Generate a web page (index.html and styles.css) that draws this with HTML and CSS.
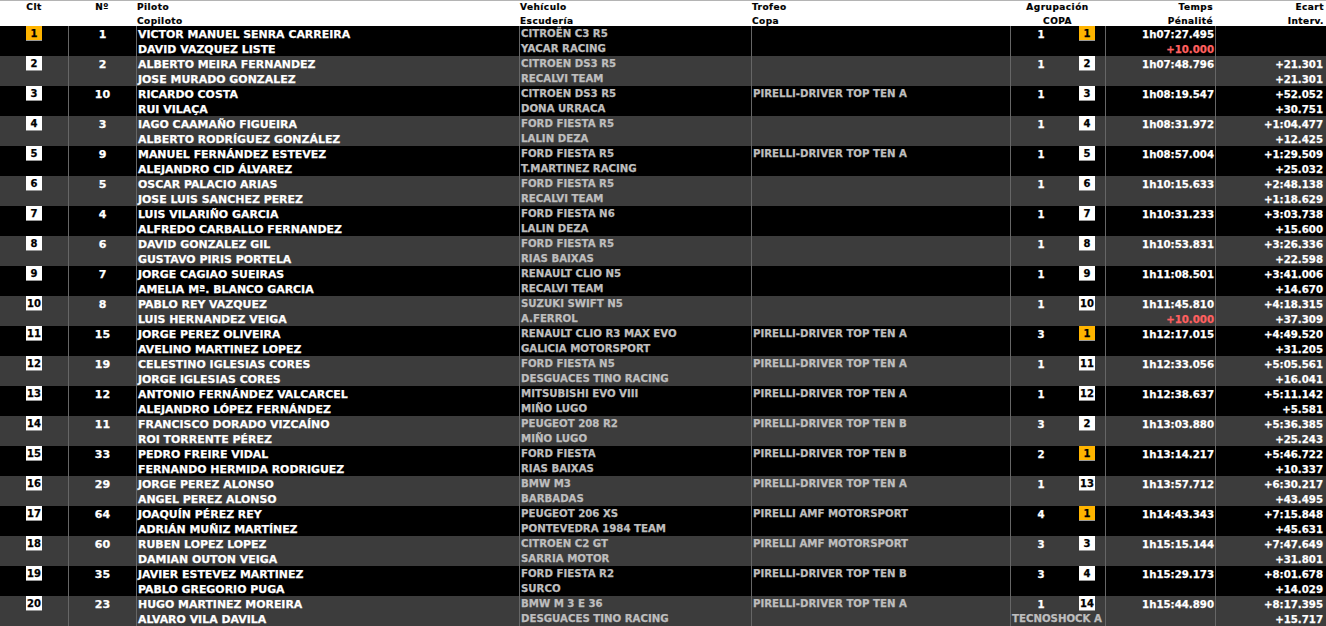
FILE: index.html
```html
<!DOCTYPE html>
<html lang="es">
<head>
<meta charset="utf-8">
<title>Clasificación</title>
<link rel="stylesheet" href="styles.css">
</head>
<body>
<div class="board">
<div class="head">
<div class="h-c"><span>Clt</span></div><div class="h-c"><span>Nº</span></div><div class="h-l"><span>Piloto</span><span>Copiloto</span></div><div class="h-l"><span>Vehículo</span><span>Escudería</span></div><div class="h-l"><span>Trofeo</span><span>Copa</span></div><div class="h-c"><span>Agrupación</span><span>COPA</span></div><div class="h-r"><span>Temps</span><span>Pénalité</span></div><div class="h-r"><span>Ecart</span><span>Interv.</span></div>
</div>
<div class="row"><div class="c-pos"><span class="badge gold">1</span></div><div class="c-num">1</div><div class="c-crew"><span>VICTOR MANUEL SENRA CARREIRA</span><span>DAVID VAZQUEZ LISTE</span></div><div class="c-car"><span>CITROËN C3 R5</span><span>YACAR RACING</span></div><div class="c-car"></div><div class="c-agr"><span class="agr-n">1</span><span class="badge gold">1</span></div><div class="c-time"><span>1h07:27.495</span><span class="pen">+10.000</span></div><div class="c-time"></div></div>
<div class="row"><div class="c-pos"><span class="badge">2</span></div><div class="c-num">2</div><div class="c-crew"><span>ALBERTO MEIRA FERNANDEZ</span><span>JOSE MURADO GONZALEZ</span></div><div class="c-car"><span>CITROEN DS3 R5</span><span>RECALVI TEAM</span></div><div class="c-car"></div><div class="c-agr"><span class="agr-n">1</span><span class="badge">2</span></div><div class="c-time"><span>1h07:48.796</span></div><div class="c-time"><span>+21.301</span><span>+21.301</span></div></div>
<div class="row"><div class="c-pos"><span class="badge">3</span></div><div class="c-num">10</div><div class="c-crew"><span>RICARDO COSTA</span><span>RUI VILAÇA</span></div><div class="c-car"><span>CITROEN DS3 R5</span><span>DONA URRACA</span></div><div class="c-car"><span>PIRELLI-DRIVER TOP TEN A</span></div><div class="c-agr"><span class="agr-n">1</span><span class="badge">3</span></div><div class="c-time"><span>1h08:19.547</span></div><div class="c-time"><span>+52.052</span><span>+30.751</span></div></div>
<div class="row"><div class="c-pos"><span class="badge">4</span></div><div class="c-num">3</div><div class="c-crew"><span>IAGO CAAMAÑO FIGUEIRA</span><span>ALBERTO RODRÍGUEZ GONZÁLEZ</span></div><div class="c-car"><span>FORD FIESTA R5</span><span>LALIN DEZA</span></div><div class="c-car"></div><div class="c-agr"><span class="agr-n">1</span><span class="badge">4</span></div><div class="c-time"><span>1h08:31.972</span></div><div class="c-time"><span>+1:04.477</span><span>+12.425</span></div></div>
<div class="row"><div class="c-pos"><span class="badge">5</span></div><div class="c-num">9</div><div class="c-crew"><span>MANUEL FERNÁNDEZ ESTEVEZ</span><span>ALEJANDRO CID ÁLVAREZ</span></div><div class="c-car"><span>FORD FIESTA R5</span><span>T.MARTINEZ RACING</span></div><div class="c-car"><span>PIRELLI-DRIVER TOP TEN A</span></div><div class="c-agr"><span class="agr-n">1</span><span class="badge">5</span></div><div class="c-time"><span>1h08:57.004</span></div><div class="c-time"><span>+1:29.509</span><span>+25.032</span></div></div>
<div class="row"><div class="c-pos"><span class="badge">6</span></div><div class="c-num">5</div><div class="c-crew"><span>OSCAR PALACIO ARIAS</span><span>JOSE LUIS SANCHEZ PEREZ</span></div><div class="c-car"><span>FORD FIESTA R5</span><span>RECALVI TEAM</span></div><div class="c-car"></div><div class="c-agr"><span class="agr-n">1</span><span class="badge">6</span></div><div class="c-time"><span>1h10:15.633</span></div><div class="c-time"><span>+2:48.138</span><span>+1:18.629</span></div></div>
<div class="row"><div class="c-pos"><span class="badge">7</span></div><div class="c-num">4</div><div class="c-crew"><span>LUIS VILARIÑO GARCIA</span><span>ALFREDO CARBALLO FERNANDEZ</span></div><div class="c-car"><span>FORD FIESTA N6</span><span>LALIN DEZA</span></div><div class="c-car"></div><div class="c-agr"><span class="agr-n">1</span><span class="badge">7</span></div><div class="c-time"><span>1h10:31.233</span></div><div class="c-time"><span>+3:03.738</span><span>+15.600</span></div></div>
<div class="row"><div class="c-pos"><span class="badge">8</span></div><div class="c-num">6</div><div class="c-crew"><span>DAVID GONZALEZ GIL</span><span>GUSTAVO PIRIS PORTELA</span></div><div class="c-car"><span>FORD FIESTA R5</span><span>RIAS BAIXAS</span></div><div class="c-car"></div><div class="c-agr"><span class="agr-n">1</span><span class="badge">8</span></div><div class="c-time"><span>1h10:53.831</span></div><div class="c-time"><span>+3:26.336</span><span>+22.598</span></div></div>
<div class="row"><div class="c-pos"><span class="badge">9</span></div><div class="c-num">7</div><div class="c-crew"><span>JORGE CAGIAO SUEIRAS</span><span>AMELIA Mª. BLANCO GARCIA</span></div><div class="c-car"><span>RENAULT CLIO N5</span><span>RECALVI TEAM</span></div><div class="c-car"></div><div class="c-agr"><span class="agr-n">1</span><span class="badge">9</span></div><div class="c-time"><span>1h11:08.501</span></div><div class="c-time"><span>+3:41.006</span><span>+14.670</span></div></div>
<div class="row"><div class="c-pos"><span class="badge">10</span></div><div class="c-num">8</div><div class="c-crew"><span>PABLO REY VAZQUEZ</span><span>LUIS HERNANDEZ VEIGA</span></div><div class="c-car"><span>SUZUKI SWIFT N5</span><span>A.FERROL</span></div><div class="c-car"></div><div class="c-agr"><span class="agr-n">1</span><span class="badge">10</span></div><div class="c-time"><span>1h11:45.810</span><span class="pen">+10.000</span></div><div class="c-time"><span>+4:18.315</span><span>+37.309</span></div></div>
<div class="row"><div class="c-pos"><span class="badge">11</span></div><div class="c-num">15</div><div class="c-crew"><span>JORGE PEREZ OLIVEIRA</span><span>AVELINO MARTINEZ LOPEZ</span></div><div class="c-car"><span>RENAULT CLIO R3 MAX EVO</span><span>GALICIA MOTORSPORT</span></div><div class="c-car"><span>PIRELLI-DRIVER TOP TEN A</span></div><div class="c-agr"><span class="agr-n">3</span><span class="badge gold">1</span></div><div class="c-time"><span>1h12:17.015</span></div><div class="c-time"><span>+4:49.520</span><span>+31.205</span></div></div>
<div class="row"><div class="c-pos"><span class="badge">12</span></div><div class="c-num">19</div><div class="c-crew"><span>CELESTINO IGLESIAS CORES</span><span>JORGE IGLESIAS CORES</span></div><div class="c-car"><span>FORD FIESTA N5</span><span>DESGUACES TINO RACING</span></div><div class="c-car"><span>PIRELLI-DRIVER TOP TEN A</span></div><div class="c-agr"><span class="agr-n">1</span><span class="badge">11</span></div><div class="c-time"><span>1h12:33.056</span></div><div class="c-time"><span>+5:05.561</span><span>+16.041</span></div></div>
<div class="row"><div class="c-pos"><span class="badge">13</span></div><div class="c-num">12</div><div class="c-crew"><span>ANTONIO FERNÁNDEZ VALCARCEL</span><span>ALEJANDRO LÓPEZ FERNÁNDEZ</span></div><div class="c-car"><span>MITSUBISHI EVO VIII</span><span>MIÑO LUGO</span></div><div class="c-car"><span>PIRELLI-DRIVER TOP TEN A</span></div><div class="c-agr"><span class="agr-n">1</span><span class="badge">12</span></div><div class="c-time"><span>1h12:38.637</span></div><div class="c-time"><span>+5:11.142</span><span>+5.581</span></div></div>
<div class="row"><div class="c-pos"><span class="badge">14</span></div><div class="c-num">11</div><div class="c-crew"><span>FRANCISCO DORADO VIZCAÍNO</span><span>ROI TORRENTE PÉREZ</span></div><div class="c-car"><span>PEUGEOT 208 R2</span><span>MIÑO LUGO</span></div><div class="c-car"><span>PIRELLI-DRIVER TOP TEN B</span></div><div class="c-agr"><span class="agr-n">3</span><span class="badge">2</span></div><div class="c-time"><span>1h13:03.880</span></div><div class="c-time"><span>+5:36.385</span><span>+25.243</span></div></div>
<div class="row"><div class="c-pos"><span class="badge">15</span></div><div class="c-num">33</div><div class="c-crew"><span>PEDRO FREIRE VIDAL</span><span>FERNANDO HERMIDA RODRIGUEZ</span></div><div class="c-car"><span>FORD FIESTA</span><span>RIAS BAIXAS</span></div><div class="c-car"><span>PIRELLI-DRIVER TOP TEN B</span></div><div class="c-agr"><span class="agr-n">2</span><span class="badge gold">1</span></div><div class="c-time"><span>1h13:14.217</span></div><div class="c-time"><span>+5:46.722</span><span>+10.337</span></div></div>
<div class="row"><div class="c-pos"><span class="badge">16</span></div><div class="c-num">29</div><div class="c-crew"><span>JORGE PEREZ ALONSO</span><span>ANGEL PEREZ ALONSO</span></div><div class="c-car"><span>BMW M3</span><span>BARBADAS</span></div><div class="c-car"><span>PIRELLI-DRIVER TOP TEN A</span></div><div class="c-agr"><span class="agr-n">1</span><span class="badge">13</span></div><div class="c-time"><span>1h13:57.712</span></div><div class="c-time"><span>+6:30.217</span><span>+43.495</span></div></div>
<div class="row"><div class="c-pos"><span class="badge">17</span></div><div class="c-num">64</div><div class="c-crew"><span>JOAQUÍN PÉREZ REY</span><span>ADRIÁN MUÑIZ MARTÍNEZ</span></div><div class="c-car"><span>PEUGEOT 206 XS</span><span>PONTEVEDRA 1984 TEAM</span></div><div class="c-car"><span>PIRELLI AMF MOTORSPORT</span></div><div class="c-agr"><span class="agr-n">4</span><span class="badge gold">1</span></div><div class="c-time"><span>1h14:43.343</span></div><div class="c-time"><span>+7:15.848</span><span>+45.631</span></div></div>
<div class="row"><div class="c-pos"><span class="badge">18</span></div><div class="c-num">60</div><div class="c-crew"><span>RUBEN LOPEZ LOPEZ</span><span>DAMIAN OUTON VEIGA</span></div><div class="c-car"><span>CITROEN C2 GT</span><span>SARRIA MOTOR</span></div><div class="c-car"><span>PIRELLI AMF MOTORSPORT</span></div><div class="c-agr"><span class="agr-n">3</span><span class="badge">3</span></div><div class="c-time"><span>1h15:15.144</span></div><div class="c-time"><span>+7:47.649</span><span>+31.801</span></div></div>
<div class="row"><div class="c-pos"><span class="badge">19</span></div><div class="c-num">35</div><div class="c-crew"><span>JAVIER ESTEVEZ MARTINEZ</span><span>PABLO GREGORIO PUGA</span></div><div class="c-car"><span>FORD FIESTA R2</span><span>SURCO</span></div><div class="c-car"><span>PIRELLI-DRIVER TOP TEN B</span></div><div class="c-agr"><span class="agr-n">3</span><span class="badge">4</span></div><div class="c-time"><span>1h15:29.173</span></div><div class="c-time"><span>+8:01.678</span><span>+14.029</span></div></div>
<div class="row"><div class="c-pos"><span class="badge">20</span></div><div class="c-num">23</div><div class="c-crew"><span>HUGO MARTINEZ MOREIRA</span><span>ALVARO VILA DAVILA</span></div><div class="c-car"><span>BMW M 3 E 36</span><span>DESGUACES TINO RACING</span></div><div class="c-car"><span>PIRELLI-DRIVER TOP TEN A</span></div><div class="c-agr"><span class="agr-n">1</span><span class="badge">14</span><span class="agr-cup">TECNOSHOCK A</span></div><div class="c-time"><span>1h15:44.890</span></div><div class="c-time"><span>+8:17.395</span><span>+15.717</span></div></div>
</div>
</body>
</html>
```
FILE: styles.css
```css
* { box-sizing: border-box; }
html, body { margin: 0; padding: 0; height: 626px; overflow: hidden; background: #fff; }
body { font-family: "DejaVu Sans", Verdana, sans-serif; font-weight: 700; }
.board { width: 1326px; }
.head, .row {
  display: grid;
  grid-template-columns: 68px 68px 383px 232px 259px 95px 110px 111px;
  white-space: nowrap;
}
.head {
  height: 26px;
  border-top: 1px solid #b4b4b4;
  font-size: 9px;
  letter-spacing: 0.45px;
  color: #000;
  background: #fff;
  -webkit-text-stroke: 0.2px #000;
}
.head div { display: flex; flex-direction: column; }
.head span { height: 14px; line-height: 12px; }
.h-c { align-items: center; }
.h-l { padding-left: 1px; }
.h-r { align-items: flex-end; padding-right: 2px; }
.row { height: 30px; background: #000; color: #fff; font-size: 10.2px; -webkit-text-stroke: 0.25px currentColor; }
.row:nth-child(odd) { background: #3c3c3c; }
.row > div { border-left: 1px solid #666; }
.row > div:first-child { border-left: 0; }
.c-pos { display: flex; justify-content: center; align-items: flex-start; }
.badge {
  display: block;
  width: 16px;
  height: 15px;
  background: #fff;
  color: #000;
  border-bottom: 1px solid #999;
  font-size: 10px;
  line-height: 15px;
  text-align: center;
}
.badge.gold { background: #ffb400; }
.c-num { text-align: center; line-height: 17px; font-size: 11px; }
.c-crew, .c-car, .c-time { display: flex; flex-direction: column; }
.c-crew span, .c-car span, .c-time span { height: 15px; line-height: 17px; }
.c-crew { padding-left: 1px; font-size: 10.95px; }
.c-car { padding-left: 1px; color: #bebebe; font-size: 10.2px; }
.c-car span { line-height: 16px; }
.c-time { align-items: flex-end; padding-right: 1px; }
.c-time + .c-time { padding-right: 3px; }
.pen { color: #ff6060; }
.c-agr {
  display: grid;
  grid-template-columns: 60px 16px;
  column-gap: 8px;
  grid-template-rows: 15px 15px;
  align-items: start;
  line-height: 17px;
}
.agr-n { text-align: center; }
.agr-cup {
  grid-column: 1 / -1;
  color: #bebebe;
  font-size: 10.2px;
  line-height: 16px;
  text-align: center;
  margin-left: 1px;
}
```
